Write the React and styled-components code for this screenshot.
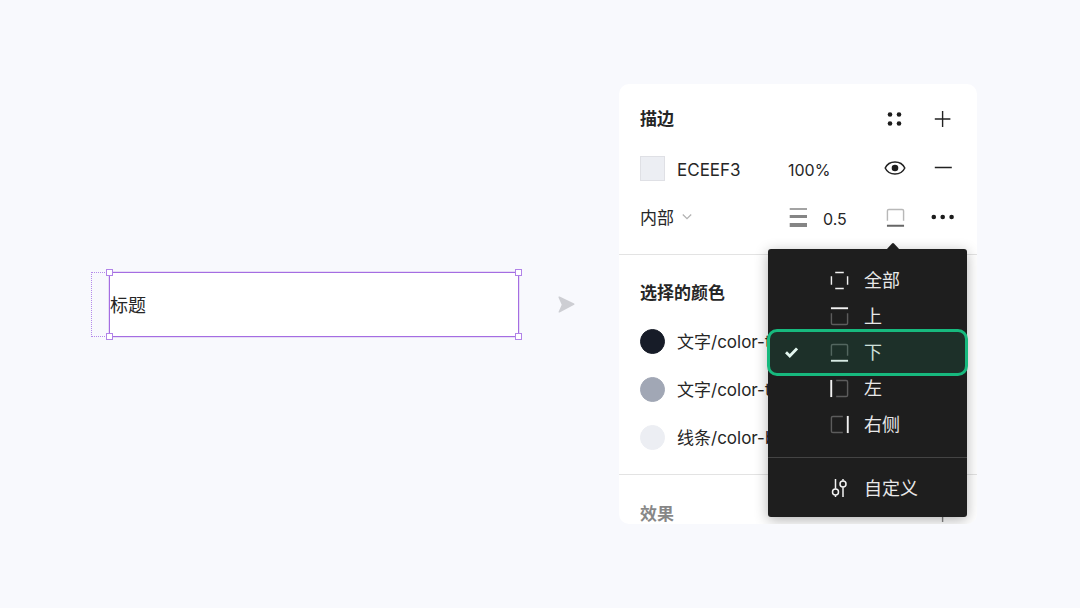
import React, { useState } from "react";
import styled, { createGlobalStyle } from "styled-components";

const GlobalStyle = createGlobalStyle`
  * {
    box-sizing: border-box;
  }

  body {
    margin: 0;
    background: #f8f9fd;
    color: #262626;
    font-family: Inter, "Noto Sans CJK SC", sans-serif;
    font-size: 17px;
  }

  button, input, select {
    margin: 0;
    padding: 0;
    border: 0;
    background: none;
    color: inherit;
    font: inherit;
  }

  svg {
    display: block;
    flex: none;
  }
`;

const Stage = styled.main`
  display: flex;
  align-items: center;
  gap: 39px;
  min-height: 100vh;
  padding: 24px 103px 24px 91px;
`;

/* selected layer on the left */

const Preview = styled.div`
  display: flex;
  flex: 1;
  min-width: 0;
`;

const PaddingGuide = styled.div`
  width: 18px;
  border: 1px dotted #b48bea;
  border-right: 0;
`;

const Frame = styled.div`
  position: relative;
  flex: 1;
  padding: 19px 0 16px;
  border: 1px solid #a56de2;
  background: #fff;
  box-shadow: 0 0 0 1px rgba(165, 109, 226, 0.2);
  font-size: 18px;
  line-height: 28px;
`;

const Handle = styled.span`
  position: absolute;
  ${(props) => (props.$bottom ? "bottom" : "top")}: -4px;
  ${(props) => (props.$right ? "right" : "left")}: -4px;
  width: 7px;
  height: 7px;
  border: 1px solid #b183e8;
  background: #fff;
`;

/* stroke panel */

const Panel = styled.section`
  width: 358px;
  border-radius: 10px;
  background: #fff;
  overflow: hidden;
`;

const Section = styled.div`
  padding: ${(props) => props.$top}px 10px 13px 21px;
  border-bottom: 1px solid #e3e3e3;
`;

const LastSection = styled.div`
  padding: 27px 10px 0 21px;
  opacity: 0.55;
`;

const Row = styled.div`
  display: grid;
  grid-template-columns: 148px 1fr 48px 48px;
  align-items: center;
  height: ${(props) => props.$height || 48}px;
`;

const Title = styled.h2`
  margin: 0;
  grid-column: span 2;
  font-size: 17px;
  font-weight: 600;
  line-height: 24px;
`;

const Field = styled.label`
  display: flex;
  align-items: center;
  gap: ${(props) => props.$gap || 12}px;
  min-width: 0;
`;

const TextInput = styled.input`
  flex: 1;
  width: 100%;
  min-width: 0;
  height: 26px;
  padding-top: 3px;
  outline: none;
  font-size: ${(props) => (props.$number ? 16 : 17)}px;
`;

const Swatch = styled.span`
  flex: none;
  width: 25px;
  height: 25px;
  border: 1px solid ${(props) => props.$border || props.$color};
  border-radius: ${(props) => (props.$round ? "50%" : "0")};
  background: ${(props) => props.$color};
`;

const PositionSelect = styled.select`
  appearance: none;
  height: 26px;
  padding-top: 2px;
  outline: none;
`;

const IconButton = styled.button`
  display: flex;
  align-items: center;
  justify-content: center;
  width: 48px;
  height: ${(props) => props.$height || 48}px;
  cursor: pointer;
`;

const ColorRow = styled.div`
  display: flex;
  align-items: center;
  gap: 12px;
  height: 48px;
  white-space: nowrap;
`;

/* side picker */

const Anchor = styled.div`
  position: relative;
`;

const Menu = styled.div`
  position: absolute;
  top: 56px;
  right: -48px;
  z-index: 1;
  width: 199px;
  padding: 13px 0 11px;
  border-radius: 3px;
  background: #1e1e1e;
  box-shadow: 0 3px 14px rgba(0, 0, 0, 0.3);
  color: #e8e8e8;
`;

const Pointer = styled.svg`
  position: absolute;
  top: -7px;
  left: 117px;
`;

const MenuItem = styled.button`
  position: relative;
  display: grid;
  grid-template-columns: 45px 34px 1fr;
  align-items: center;
  width: 100%;
  height: 36px;
  padding-left: 17px;
  font-size: 18px;
  text-align: left;
  cursor: pointer;

  &[aria-checked="true"]::after {
    content: "";
    position: absolute;
    inset: -5px -1px -6px;
    border: 3px solid #17b97e;
    border-radius: 10px;
    background: rgba(23, 185, 126, 0.12);
  }
`;

const Label = styled.span`
  padding-bottom: 2px;
`;

const Divider = styled.hr`
  height: 1px;
  margin: 15px 0 12px;
  border: 0;
  background: #444;
`;

const Arrow = () => (
  <svg width="22" height="22" viewBox="0 0 22 22">
    <path
      d="M1.6 3.600 16.200 10.400a1 1 0 0 1 0 1.400L1.6 19.400c-.9.4-1.300-.3-.9-1l3-6.700L.6 4.700C.2 3.800.8 3.200 1.600 3.600z"
      fill="#cdced3"
    />
  </svg>
);

const StyleIcon = () => (
  <svg width="20" height="20" viewBox="0 0 20 20" fill="#1c1c1c">
    <circle cx="5" cy="5.500" r="2.300" />
    <circle cx="14" cy="5.500" r="2.300" />
    <circle cx="5" cy="14.500" r="2.300" />
    <circle cx="14" cy="14.500" r="2.300" />
  </svg>
);

const PlusIcon = () => (
  <svg width="18" height="18" viewBox="0 0 18 18" stroke="#222" strokeWidth="1.4">
    <path d="M.8 9h15.600M8.600 1v16" />
  </svg>
);

const MinusIcon = () => (
  <svg width="18" height="18" viewBox="0 0 18 18" stroke="#222" strokeWidth="1.4">
    <path d="M.8 8.500h17" />
  </svg>
);

const EyeIcon = () => (
  <svg width="22" height="16" viewBox="0 0 22 16">
    <path
      d="M1.200 8C3 4.200 6.600 2 11 2s8 2.200 9.800 6c-1.800 3.800-5.400 6-9.800 6S3 11.800 1.200 8z"
      fill="none"
      stroke="#222"
      strokeWidth="1.500"
    />
    <circle cx="11" cy="8" r="3.300" fill="#1c1c1c" />
  </svg>
);

const MoreIcon = () => (
  <svg width="24" height="6" viewBox="0 0 24 6" fill="#1c1c1c">
    <circle cx="2.800" cy="3" r="2.300" />
    <circle cx="11.700" cy="3" r="2.300" />
    <circle cx="20.600" cy="3" r="2.300" />
  </svg>
);

const WeightIcon = () => (
  <svg width="20" height="20" viewBox="0 0 20 20" fill="#858585">
    <path d="M1.700 1.300h17.300v1.500H1.700zM1.700 8h17.300v3H1.700zM1.700 16h17.300v4H1.700z" />
  </svg>
);

const ChevronIcon = () => (
  <svg width="10" height="8" viewBox="0 0 10 8" fill="none" stroke="#b3b3b3" strokeWidth="1.300">
    <path d="m.8 1.500 4.200 4.200 4.200-4.200" />
  </svg>
);

const CheckIcon = () => (
  <svg width="13" height="12" viewBox="0 0 13 12" fill="none" stroke="#fff" strokeWidth="2.800">
    <path d="m1 6.200 3.800 3.800L12 2.400" />
  </svg>
);

const rotation = { top: 180, bottom: 0, left: 90, right: 270 };

const SideIcon = ({ side, line = "#f2f2f2", box = "#5c5c5c" }) => (
  <svg width="19" height="19" viewBox="0 0 20 20" fill="none" strokeWidth="1.500">
    {side === "all" ? (
      <path
        d="M5.500 1.500h9M5.500 18.500h9M1.500 5.500v9M18.500 5.500v9"
        stroke={line}
      />
    ) : (
      <g transform={`rotate(${rotation[side]} 10 10)`}>
        <path d="M1.500 13.500V3q0-1.500 1.500-1.500h14q1.500 0 1.500 1.500v10.500" stroke={box} />
        <path d="M1 18.700h18" stroke={line} strokeWidth="2" />
      </g>
    )}
  </svg>
);

const CustomIcon = () => (
  <svg width="20" height="20" viewBox="0 0 20 20" fill="none" stroke="#f2f2f2" strokeWidth="1.500">
    <path d="M5.500 1v9.800M5.500 17.200V19M13 1v1.800M13 9.200V19" />
    <circle cx="5.500" cy="14" r="3" />
    <circle cx="13" cy="6" r="3" />
  </svg>
);

const sides = [
  { id: "all", label: "全部" },
  { id: "top", label: "上" },
  { id: "bottom", label: "下" },
  { id: "left", label: "左" },
  { id: "right", label: "右侧" },
];

const colors = [
  { name: "文字/color-t", value: "#171c28" },
  { name: "文字/color-t", value: "#a1a7b5" },
  { name: "线条/color-b", value: "#eceef3" },
];

function SideMenu({ side, onSelect }) {
  return (
    <Menu role="menu">
      <Pointer width="16" height="8" viewBox="0 0 16 8">
        <path d="M1 8 7 1.500q1-1 2 0L15 8z" fill="#1e1e1e" />
      </Pointer>
      {sides.map((item) => (
        <MenuItem
          key={item.id}
          role="menuitemradio"
          aria-checked={side === item.id}
          onClick={() => onSelect(item.id)}
        >
          <span>{side === item.id && <CheckIcon />}</span>
          <SideIcon side={item.id} />
          <Label>{item.label}</Label>
        </MenuItem>
      ))}
      <Divider />
      <MenuItem role="menuitem">
        <span />
        <CustomIcon />
        <Label>自定义</Label>
      </MenuItem>
    </Menu>
  );
}

function App() {
  const [side, setSide] = useState("bottom");
  const [open, setOpen] = useState(true);

  return (
    <Stage>
      <GlobalStyle />

      <Preview>
        <PaddingGuide />
        <Frame>
          标题
          <Handle />
          <Handle $right />
          <Handle $bottom />
          <Handle $bottom $right />
        </Frame>
      </Preview>

      <Arrow />

      <Panel>
        <Section $top={11}>
          <Row>
            <Title>描边</Title>
            <IconButton aria-label="样式"><StyleIcon /></IconButton>
            <IconButton aria-label="添加描边"><PlusIcon /></IconButton>
          </Row>
          <Row $height={50}>
            <Field>
              <Swatch $color="#eceef3" $border="#dfe0e5" />
              <TextInput aria-label="颜色" defaultValue="ECEEF3" />
            </Field>
            <TextInput $number aria-label="不透明度" defaultValue="100%" />
            <IconButton aria-label="显示"><EyeIcon /></IconButton>
            <IconButton aria-label="移除描边"><MinusIcon /></IconButton>
          </Row>
          <Row>
            <Field $gap={8}>
              <PositionSelect aria-label="描边位置">
                <option>内部</option>
              </PositionSelect>
              <ChevronIcon />
            </Field>
            <Field $gap={15}>
              <WeightIcon />
              <TextInput $number aria-label="粗细" defaultValue="0.5" />
            </Field>
            <Anchor>
              <IconButton aria-label="描边方向" aria-expanded={open} onClick={() => setOpen(!open)}>
                <SideIcon side={side} line="#666" box="#b8b8b8" />
              </IconButton>
              {open && <SideMenu side={side} onSelect={setSide} />}
            </Anchor>
            <IconButton aria-label="更多"><MoreIcon /></IconButton>
          </Row>
        </Section>

        <Section $top={14}>
          <Row>
            <Title>选择的颜色</Title>
          </Row>
          {colors.map((color, index) => (
            <ColorRow key={index}>
              <Swatch $round $color={color.value} />
              <Label>{color.name}</Label>
            </ColorRow>
          ))}
        </Section>

        <LastSection>
          <Row $height={22}>
            <Title>效果</Title>
            <span />
            <IconButton $height={22} aria-label="添加效果"><PlusIcon /></IconButton>
          </Row>
        </LastSection>
      </Panel>
    </Stage>
  );
}

export default App;
